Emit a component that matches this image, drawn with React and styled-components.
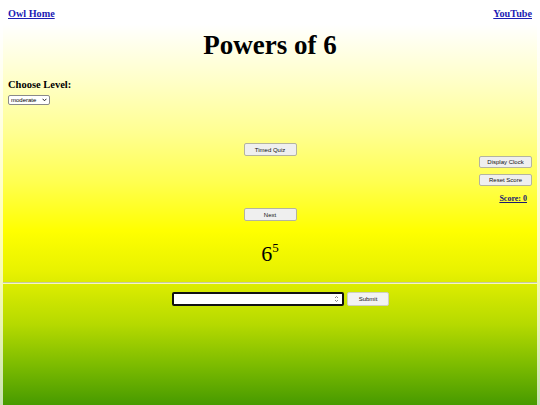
import React from "react";
import styled, { createGlobalStyle } from "styled-components";

const Global = createGlobalStyle`
  html, body { margin: 0; padding: 0; background: #fff; }
  body { font-family: "Liberation Serif", "Times New Roman", serif; }
`;

const Page = styled.div`
  min-height: 405px;
  box-sizing: border-box;
  padding: 8px 8px 0;
  background: linear-gradient(
    to bottom,
    #ffffff 0%,
    #ffffff 6%,
    #ffffc8 20%,
    #ffff90 33%,
    #ffff50 45%,
    #ffff00 57%,
    #e8f200 67%,
    #b6da00 80%,
    #7dbc00 90%,
    #479a00 100%
  );
  box-shadow: inset 3px 0 0 rgba(255, 255, 255, 0.7),
    inset -3px 0 0 rgba(255, 255, 255, 0.7);
`;

const TopBar = styled.div`
  display: flex;
  justify-content: space-between;
  align-items: baseline;
  height: 14px;
`;

const NavLink = styled.a`
  font-size: 10.2px;
  font-weight: bold;
  color: #1c1cb4;
  text-decoration: underline;
`;

const Title = styled.h1`
  margin: 6px 0 0;
  text-align: center;
  font-size: 27px;
  line-height: 34px;
  font-weight: bold;
  color: #000;
`;

const Label = styled.h3`
  margin: 16px 0 0;
  font-size: 10.5px;
  line-height: 13px;
  font-weight: bold;
`;

const SelectWrap = styled.div`
  position: relative;
  width: 42px;
  height: 10px;
  margin-top: 4px;
`;

const LevelSelect = styled.select`
  appearance: none;
  display: block;
  width: 100%;
  height: 100%;
  box-sizing: border-box;
  padding: 0 0 0 2px;
  font-family: "Liberation Sans", Arial, sans-serif;
  font-size: 6px;
  line-height: 8px;
  border: 1px solid #8a8a8a;
  border-radius: 2px;
  background: #fff;
  color: #000;
`;

const Chevron = styled.svg`
  position: absolute;
  right: 3px;
  top: 3px;
  pointer-events: none;
`;

const Middle = styled.div`
  display: grid;
  grid-template-columns: 1fr auto 1fr;
  margin-top: 38px;
`;

const Center = styled.div`
  grid-column: 2;
  display: flex;
  flex-direction: column;
  align-items: center;
`;

const Side = styled.div`
  grid-column: 3;
  display: flex;
  flex-direction: column;
  align-items: flex-end;
  padding-top: 13px;
  gap: 6px;
`;

const Btn = styled.button`
  width: ${(p) => p.$w || 53}px;
  height: ${(p) => p.$h || 12}px;
  padding: 0;
  font-family: "Liberation Sans", Arial, sans-serif;
  font-size: 6px;
  color: #111;
  background: ${(p) => p.$bg || "#efefef"};
  border: 1px solid ${(p) => p.$bd || "#b4b4a0"};
  border-radius: 2px;
  margin-top: ${(p) => p.$mt || 0}px;
`;

const Score = styled.a`
  margin-top: 2px;
  margin-right: 5px;
  font-size: 8px;
  line-height: 10px;
  font-weight: bold;
  color: #1a1a70;
  text-decoration: underline;
`;

const Power = styled.div`
  margin-top: 22px;
  font-size: 22px;
  line-height: 22px;
  color: #000;
  sup {
    font-size: 13px;
    vertical-align: 9px;
    line-height: 0;
  }
`;

const Rule = styled.hr`
  margin: 17px -5px 0;
  border: none;
  border-top: 1px solid #c8c8a0;
  border-bottom: 1px solid #f4f8c0;
`;

const AnswerRow = styled.div`
  display: flex;
  justify-content: center;
  gap: 3px;
  margin-top: 8px;
  padding-left: 21px;
`;

const InputBox = styled.div`
  position: relative;
  width: 172px;
  height: 14px;
  box-sizing: border-box;
  border: 2px solid #111;
  border-radius: 2px;
  background: #fff;
`;

const Field = styled.input`
  width: 100%;
  height: 100%;
  box-sizing: border-box;
  border: none;
  outline: none;
  background: transparent;
  padding: 0 2px;
  font-size: 7px;
`;

const Spinner = styled.svg`
  position: absolute;
  right: 3px;
  top: 1px;
`;

export default function App() {
  return (
    <>
      <Global />
      <Page>
        <TopBar>
          <NavLink href="#">Owl Home</NavLink>
          <NavLink href="#">YouTube</NavLink>
        </TopBar>
        <Title>Powers of 6</Title>
        <Label>Choose Level:</Label>
        <SelectWrap>
          <LevelSelect defaultValue="moderate">
            <option value="easy">easy</option>
            <option value="moderate">moderate</option>
            <option value="hard">hard</option>
          </LevelSelect>
          <Chevron width="5" height="4" viewBox="0 0 5 4">
            <path d="M0.6 0.8 L2.5 2.8 L4.4 0.8" fill="none" stroke="#222" strokeWidth="1" />
          </Chevron>
        </SelectWrap>
        <Middle>
          <Center>
            <Btn $h={13}>Timed Quiz</Btn>
            <Btn $h={13} $mt={52}>Next</Btn>
            <Power>
              6<sup>5</sup>
            </Power>
          </Center>
          <Side>
            <Btn>Display Clock</Btn>
            <Btn>Reset Score</Btn>
            <Score href="#">Score: 0</Score>
          </Side>
        </Middle>
        <Rule />
        <AnswerRow>
          <InputBox>
            <Field type="text" />
            <Spinner width="5" height="8" viewBox="0 0 5 8">
              <path d="M1 3 L2.5 1.5 L4 3" fill="none" stroke="#666" strokeWidth="0.8" />
              <path d="M1 5 L2.5 6.5 L4 5" fill="none" stroke="#666" strokeWidth="0.8" />
            </Spinner>
          </InputBox>
          <Btn $w={42} $h={14} $bg="#f2f2f2" $bd="#cfcfc0">
            Submit
          </Btn>
        </AnswerRow>
      </Page>
    </>
  );
}
